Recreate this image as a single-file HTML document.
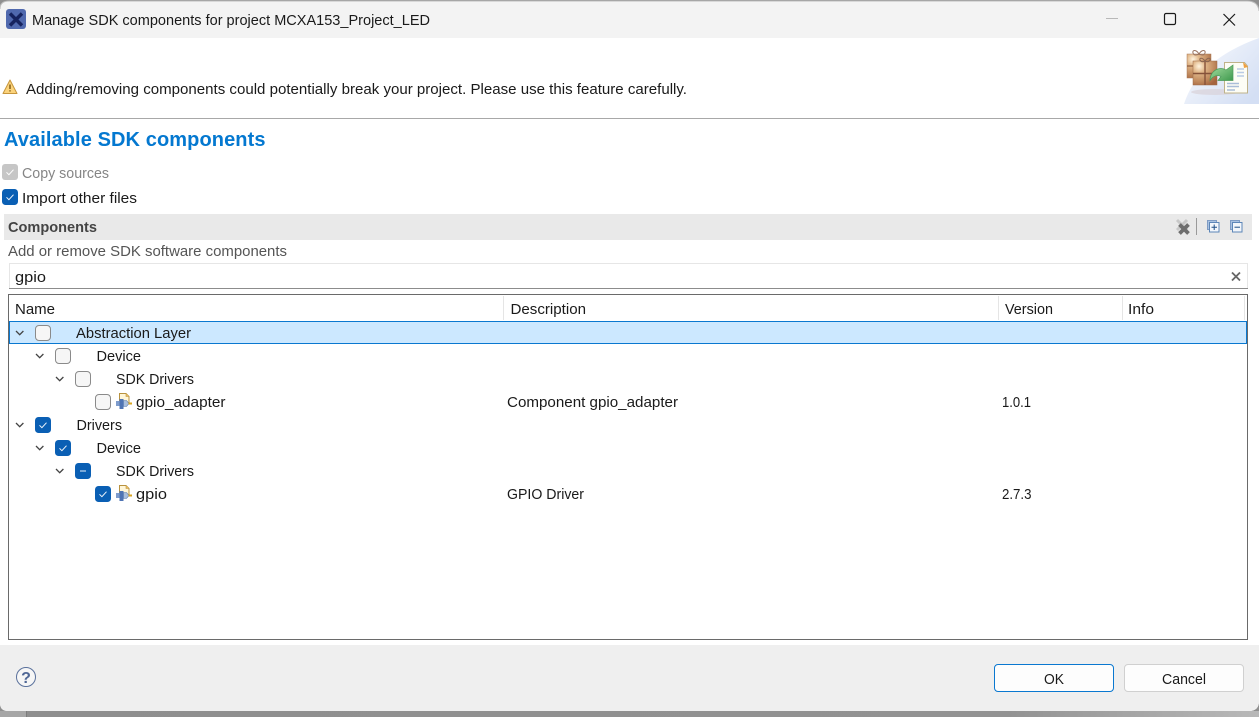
<!DOCTYPE html>
<html lang="en">
<head>
<meta charset="utf-8">
<title>Manage SDK components</title>
<style>
html,body{margin:0;padding:0;width:1259px;height:717px;overflow:hidden;background:#8f8f8f}
svg{display:block}
text{font-family:"Liberation Sans",sans-serif;font-size:15px;fill:#1a1a1a}
</style>
</head>
<body>
<svg width="1259" height="717" viewBox="0 0 1259 717" xmlns="http://www.w3.org/2000/svg">
<defs>
<linearGradient id="shadow" x1="0" x2="1" y1="0" y2="0"><stop offset="0" stop-color="#8e8e8e"/><stop offset=".8" stop-color="#929292"/><stop offset="1" stop-color="#b8b8b8"/></linearGradient>
<radialGradient id="box" cx=".25" cy=".22" r=".9"><stop offset="0" stop-color="#fff4df"/><stop offset=".28" stop-color="#e2b98c"/><stop offset=".7" stop-color="#c08a5e"/><stop offset="1" stop-color="#a5643e"/></radialGradient>
<linearGradient id="swoosh" x1="0" x2="1" y1="0" y2=".8"><stop offset="0" stop-color="#fbfcfe"/><stop offset="1" stop-color="#d4dff4"/></linearGradient>
<linearGradient id="arrow" x1="0" x2="1" y1="0" y2="1"><stop offset="0" stop-color="#a8dfa3"/><stop offset="1" stop-color="#3f9a4e"/></linearGradient>
<g id="cb"><rect x=".5" y=".5" width="15" height="15" rx="3.5" fill="#f6f6f6" stroke="#8a8a8a"/></g>
<g id="cc"><rect width="16" height="16" rx="3.5" fill="#0a5fb4"/><path d="M4.5 8.3l2.4 2.4 4.6-5" fill="none" stroke="#f0f6fc" stroke-width="1"/></g>
<g id="chev"><path d="M0 0l3.7 3.7L7.4 0" fill="none" stroke="#444" stroke-width="1.3"/></g>
<g id="plug">
<path d="M3.500.5h6.500l3 3v7H3.500z" fill="#fff6d8" stroke="#b8923f"/>
<path d="M10 .5v3h3" fill="#f0c060" stroke="#b8923f" stroke-width=".6"/>
<rect x="0" y="8" width="3.500" height="5" fill="#7e9ccc"/>
<path d="M3.500 6h4v10h-4z" fill="#4f74b4"/>
<path d="M7.500 7.500h3l2.500 3-2.500 3h-3z" fill="#a9bedc" stroke="#5f7fb0" stroke-width=".6"/>
<rect x="12.500" y="9.500" width="3.500" height="2" fill="#d9a520"/>
</g>
</defs>

<!-- window -->
<path d="M0 9Q0 1 9 1H1247Q1259 1 1259 12V701Q1259 711 1249 711H8Q0 711 0 703Z" fill="#fff"/>
<rect x="0" y="711" width="1259" height="6" fill="url(#shadow)"/>
<rect x="0" y="711" width="26" height="6" fill="#a6a6a6"/>
<rect x="26" y="711" width="1" height="6" fill="#7c7c7c"/>

<!-- title bar -->
<path d="M0 38V9Q0 1 9 1H1247Q1259 1 1259 12V38Z" fill="#f3f3f3"/>
<path d="M0 9Q0 1 9 1H1247Q1258 1 1259 11" fill="none" stroke="#bdbdbd"/>
<rect x="6" y="9" width="20" height="20" rx="3" fill="#5069ae"/>
<path d="M10 13.500l12 12M22 13.500l-12 12" stroke="#16235e" stroke-width="3.400"/>
<text x="32" y="25" textLength="398" lengthAdjust="spacingAndGlyphs">Manage SDK components for project MCXA153_Project_LED</text>
<rect x="1106" y="18" width="12" height="1" fill="#b8b8b8"/>
<rect x="1164.500" y="13.500" width="11" height="11" rx="1.500" fill="none" stroke="#1a1a1a" stroke-width="1.200"/>
<path d="M1223.500 14l11.500 11.500M1235 14l-11.500 11.500" stroke="#1a1a1a" stroke-width="1.200"/>

<!-- banner art -->
<path d="M1184 104Q1198 60 1259 38V104Z" fill="url(#swoosh)"/>
<ellipse cx="1215" cy="92" rx="24" ry="3" fill="#d8d2d8" opacity=".7"/>
<rect x="1187" y="54" width="24" height="24" fill="url(#box)" stroke="#a97a58" stroke-width=".5"/>
<path d="M1187 66h8" stroke="#8b5a3c" stroke-width="1.200"/>
<path d="M1199 54c-3-5-7-4-6-1s4 2 6 1c2 1 5 2 6-1s-3-4-6 1z" fill="none" stroke="#99735f"/>
<rect x="1193" y="61" width="24" height="24" fill="url(#box)" stroke="#9b6a48" stroke-width=".5"/>
<path d="M1193 73.500h24M1205 61v24" stroke="#85523a" stroke-width="1.400"/>
<path d="M1205 61c-3-4-6-3-5-1s3 2 5 1c2 1 4 1 5-1s-2-3-5 1z" fill="none" stroke="#8b6550"/>
<path d="M1224.500 62.500h20l3 3.500v27h-23z" fill="#fdfdf5" stroke="#bfb38a"/>
<path d="M1243 62l5 5-4 1z" fill="#f0a040"/>
<path d="M1237 69h7M1237 72.500h7M1237 76h7" stroke="#b9cbe4" stroke-width="1.400"/>
<path d="M1227 83.500h12M1227 86.500h12M1227 90h8" stroke="#a9bdd8" stroke-width="1.500"/>
<path d="M1210 80.500c0-7 5-12 11-12 2 0 3.500.5 5 1.500l7-5v15.500h-15l3-4c-4-2-8-.5-11 4z" fill="url(#arrow)" stroke="#4b9a58" stroke-width=".7"/>

<!-- warning -->
<path d="M10 80l7 13.500H3z" fill="#fbd37c" stroke="#c7963c" stroke-linejoin="round"/>
<path d="M10 84.500v4.500M10 90.200v1.300" stroke="#7a5510" stroke-width="1.400"/>
<text x="26" y="94" textLength="661" lengthAdjust="spacingAndGlyphs">Adding/removing components could potentially break your project. Please use this feature carefully.</text>
<rect x="0" y="118" width="1259" height="1" fill="#a8a8a8"/>

<!-- heading -->
<text x="4" y="146" textLength="261.500" lengthAdjust="spacing" style="font-size:20px;font-weight:700;fill:#0478d0">Available SDK components</text>

<!-- options -->
<rect x="2" y="164" width="16" height="16" rx="3" fill="#c6c6c6"/>
<path d="M6.500 172.300l2.400 2.400 4.600-5" fill="none" stroke="#fff" stroke-width="1"/>
<text x="22" y="178" textLength="87" lengthAdjust="spacingAndGlyphs" style="fill:#858585">Copy sources</text>
<use href="#cc" x="2" y="189"/>
<text x="22" y="203" textLength="115" lengthAdjust="spacingAndGlyphs">Import other files</text>

<!-- section bar -->
<rect x="4" y="214" width="1248" height="26" fill="#e9e9e9"/>
<text x="8" y="232" textLength="89" lengthAdjust="spacingAndGlyphs" style="font-weight:700;fill:#444">Components</text>
<path d="M1177 220l10 10M1187 220l-10 10" stroke="#c8c8c8" stroke-width="3"/>
<path d="M1179.500 224.500l9 9M1188.500 224.500l-9 9" stroke="#6e6e6e" stroke-width="3.800"/>
<rect x="1196" y="218" width="1" height="17" fill="#9a9a9a"/>
<rect x="1207.500" y="220.500" width="9" height="9" fill="#a9c2e2" stroke="#7f9cc4"/>
<rect x="1209.500" y="222.500" width="9.500" height="9.500" fill="#f2f6fb" stroke="#5d86b8"/>
<path d="M1211.500 227.200h5.500M1214.200 224.500v5.500" stroke="#1e4f88" stroke-width="1"/>
<rect x="1230.500" y="220.500" width="9" height="9" fill="#a9c2e2" stroke="#7f9cc4"/>
<rect x="1232.500" y="222.500" width="9.500" height="9.500" fill="#f2f6fb" stroke="#5d86b8"/>
<path d="M1234.500 227.200h5.500" stroke="#1e4f88" stroke-width="1"/>

<text x="8" y="256" textLength="279" lengthAdjust="spacingAndGlyphs" style="fill:#555">Add or remove SDK software components</text>

<!-- filter -->
<rect x="9.500" y="263.500" width="1238" height="25" fill="#fff" stroke="#e6e6e6"/>
<rect x="9" y="288" width="1239" height="1" fill="#8c8c8c"/>
<text x="15" y="282" textLength="31" lengthAdjust="spacingAndGlyphs">gpio</text>
<path d="M1232 272.500l8 8M1240 272.500l-8 8" stroke="#666" stroke-width="1.800"/>

<!-- table -->
<rect x="8.500" y="294.500" width="1239" height="345" fill="#fff" stroke="#6a6a6a"/>
<path d="M503.500 296v24M998.500 296v24M1122.500 296v24M1244.500 296v24" stroke="#e5e5e5"/>
<text x="15" y="314" textLength="40" lengthAdjust="spacingAndGlyphs">Name</text>
<text x="510.500" y="314" textLength="75.500" lengthAdjust="spacingAndGlyphs">Description</text>
<text x="1005" y="314" textLength="48" lengthAdjust="spacingAndGlyphs">Version</text>
<text x="1128" y="314" textLength="26" lengthAdjust="spacingAndGlyphs">Info</text>

<rect x="9.500" y="321.500" width="1237" height="22" fill="#cce8ff" stroke="#0a78d0"/>

<!-- tree -->
<use href="#chev" x="16" y="331"/>
<use href="#cb" x="35" y="325"/>
<text x="76" y="338" textLength="115" lengthAdjust="spacingAndGlyphs">Abstraction Layer</text>

<use href="#chev" x="36" y="354"/>
<use href="#cb" x="55" y="348"/>
<text x="96.500" y="361" textLength="44.500" lengthAdjust="spacingAndGlyphs">Device</text>

<use href="#chev" x="56" y="377"/>
<use href="#cb" x="75" y="371"/>
<text x="116" y="384" textLength="78" lengthAdjust="spacingAndGlyphs">SDK Drivers</text>

<use href="#cb" x="95" y="394"/>
<use href="#plug" x="116" y="393"/>
<text x="136" y="407" textLength="89.500" lengthAdjust="spacingAndGlyphs">gpio_adapter</text>
<text x="507" y="407" textLength="171" lengthAdjust="spacingAndGlyphs">Component gpio_adapter</text>
<text x="1002" y="407" textLength="29" lengthAdjust="spacingAndGlyphs">1.0.1</text>

<use href="#chev" x="16" y="423"/>
<use href="#cc" x="35" y="417"/>
<text x="76.500" y="430" textLength="45.500" lengthAdjust="spacingAndGlyphs">Drivers</text>

<use href="#chev" x="36" y="446"/>
<use href="#cc" x="55" y="440"/>
<text x="96.500" y="453" textLength="44.500" lengthAdjust="spacingAndGlyphs">Device</text>

<use href="#chev" x="56" y="469"/>
<rect x="75" y="463" width="16" height="16" rx="3.500" fill="#0a5fb4"/>
<path d="M80 471h6" stroke="#a9c8e8" stroke-width="1.400"/>
<text x="116" y="476" textLength="78" lengthAdjust="spacingAndGlyphs">SDK Drivers</text>

<use href="#cc" x="95" y="486"/>
<use href="#plug" x="116" y="485"/>
<text x="136" y="499" textLength="31" lengthAdjust="spacingAndGlyphs">gpio</text>
<text x="507" y="499" textLength="77" lengthAdjust="spacingAndGlyphs">GPIO Driver</text>
<text x="1002" y="499" textLength="29.500" lengthAdjust="spacingAndGlyphs">2.7.3</text>

<!-- footer -->
<path d="M0 645H1259V701Q1259 711 1249 711H8Q0 711 0 703Z" fill="#efefef"/>
<circle cx="26" cy="677" r="9.500" fill="#f6f6f6" stroke="#5a719c" stroke-width="1"/>
<text x="26" y="683" text-anchor="middle" style="font-size:16px;font-weight:700;fill:#4f6795">?</text>

<rect x="994.500" y="664.500" width="119" height="27" rx="3.500" fill="#fdfdfd" stroke="#0a78d0"/>
<text x="1044" y="684" textLength="20" lengthAdjust="spacingAndGlyphs">OK</text>
<rect x="1124.500" y="664.500" width="119" height="27" rx="3.500" fill="#fdfdfd" stroke="#d0d0d0"/>
<text x="1162" y="684" textLength="44" lengthAdjust="spacingAndGlyphs">Cancel</text>
</svg>
</body>
</html>
